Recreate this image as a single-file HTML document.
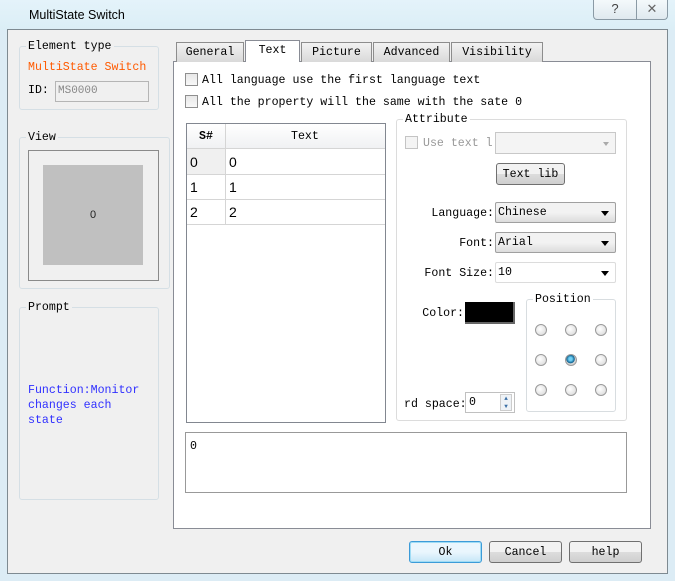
<!DOCTYPE html>
<html><head><style>
*{box-sizing:border-box;margin:0;padding:0}
body{width:675px;height:581px;background:#dcecf5;position:relative;overflow:hidden;font-family:"Liberation Mono",monospace;font-size:11.6px;color:#000;line-height:17px}
.a{position:absolute}
.gb{position:absolute;border:1px solid #d5dfe5;border-radius:3px}
.lg{position:absolute;background:#f0f0f0;padding:0 2px;line-height:13px;top:-7px;left:6px}
.tab{position:absolute;top:42px;height:20px;border:1px solid #8d8d8d;border-bottom:none;background:linear-gradient(#f2f2f2,#d9d9d9);text-align:center;line-height:19px}
.cb{position:absolute;width:13px;height:13px;border:1px solid #8f8f8f;background:linear-gradient(#e8e8e8,#f8f8f8)}
.btn{position:absolute;border:1px solid #707070;border-radius:3px;background:linear-gradient(#f2f2f2 50%,#dddddd 50%,#cfcfcf);text-align:center;line-height:21px}
.sel{position:absolute;border:1px solid #a0a0a0;border-radius:2px;background:linear-gradient(#f2f2f2 50%,#dcdcdc);line-height:20px;padding-left:2px;height:21px}
.sel:after{content:"";position:absolute;right:6px;top:8px;border:4px solid transparent;border-top:5px solid #000;border-bottom:none}
.rad{position:absolute;width:12px;height:12px;border-radius:50%;border:1px solid #9a9a9a;background:radial-gradient(circle at 40% 40%,#fff,#d4d4d4)}
.r{text-align:right}
</style></head><body>
<div class="a" style="left:0;top:0;width:675px;height:30px;background:linear-gradient(#e4f3fa,#dbeef6)"></div>
<div class="a" style="left:29px;top:7px;font-family:'Liberation Sans',sans-serif;font-size:12.5px">MultiState Switch</div>
<div class="a" style="left:593px;top:0;width:44px;height:20px;border:1px solid #8a9aa5;border-top:none;border-radius:0 0 0 4px;background:linear-gradient(#f4f9fb,#dfe9ef);text-align:center;font-family:'Liberation Sans';font-size:13px;line-height:18px;color:#444">?</div>
<div class="a" style="left:636px;top:0;width:32px;height:20px;border:1px solid #8a9aa5;border-top:none;border-radius:0 0 4px 0;background:linear-gradient(#f4f9fb,#dfe9ef);text-align:center;font-family:'Liberation Sans';font-size:13px;line-height:18px;color:#666">✕</div>
<div class="a" style="left:7px;top:29px;width:661px;height:545px;background:#f0f0f0;border:1px solid #7e8a91"></div>

<div class="gb" style="left:19px;top:46px;width:140px;height:64px"><span class="lg" style="top:-7px">Element type</span></div>
<div class="a" style="left:28px;top:59px;color:#ff5a00">MultiState Switch</div>
<div class="a" style="left:28px;top:82px">ID:</div>
<div class="a" style="left:55px;top:81px;width:94px;height:21px;border:1px solid #b5b5b5;background:#f0f0f0;color:#888;line-height:19px;padding-left:2px;font-size:11px">MS0000</div>

<div class="gb" style="left:19px;top:137px;width:151px;height:152px"><span class="lg">View</span></div>
<div class="a" style="left:28px;top:150px;width:131px;height:131px;border:1px solid #8a8a8a"></div>
<div class="a" style="left:43px;top:165px;width:100px;height:100px;background:#c0c0c0;text-align:center;line-height:100px;font-family:'Liberation Sans';font-size:11px;color:#222">0</div>

<div class="gb" style="left:19px;top:307px;width:140px;height:193px"><span class="lg">Prompt</span></div>
<div class="a" style="left:28px;top:383px;color:#3030ff;line-height:15px">Function:Monitor<br>changes each<br>state</div>

<div class="a" style="left:173px;top:61px;width:478px;height:468px;background:#fff;border:1px solid #898c95"></div>
<div class="tab" style="left:176px;width:68px">General</div>
<div class="tab" style="left:245px;top:40px;height:22px;width:55px;background:#fff;border-color:#898c95">Text</div>
<div class="tab" style="left:301px;width:71px">Picture</div>
<div class="tab" style="left:373px;width:77px">Advanced</div>
<div class="tab" style="left:451px;width:92px">Visibility</div>

<div class="cb" style="left:185px;top:73px"></div><div class="a" style="left:202px;top:72px">All language use the first language text</div>
<div class="cb" style="left:185px;top:95px"></div><div class="a" style="left:202px;top:94px">All the property will the same with the sate 0</div>

<div class="a" style="left:186px;top:123px;width:200px;height:300px;border:1px solid #828790;background:#fff"></div>
<div class="a" style="left:187px;top:124px;width:198px;height:25px;background:linear-gradient(#fff,#f0f1f3);border-bottom:1px solid #d5d5d5"></div>
<div class="a" style="left:225px;top:124px;width:1px;height:100px;background:#d5d5d5"></div>
<div class="a" style="left:199px;top:128px;font-weight:bold">S#</div>
<div class="a" style="left:291px;top:128px">Text</div>
<div class="a" style="left:187px;top:149px;width:38px;height:25px;background:#f0f0f0"></div>
<div class="a" style="left:187px;top:174px;width:198px;height:1px;background:#d5d5d5"></div>
<div class="a" style="left:187px;top:199px;width:198px;height:1px;background:#d5d5d5"></div>
<div class="a" style="left:187px;top:224px;width:198px;height:1px;background:#d5d5d5"></div>
<div class="a" style="left:190px;top:150px;font-family:'Liberation Sans';font-size:14px;line-height:25px">0<br>1<br>2</div>
<div class="a" style="left:229px;top:150px;font-family:'Liberation Sans';font-size:14px;line-height:25px">0<br>1<br>2</div>

<div class="gb" style="left:396px;top:119px;width:231px;height:302px;background:#fff;border-color:#dcdcdc"><span class="lg" style="left:6px;background:#fff">Attribute</span></div>
<div class="cb" style="left:405px;top:136px;border-color:#c4c4c4;background:#f4f4f4"></div>
<div class="a" style="left:423px;top:135px;color:#999">Use text l</div>
<div class="a" style="left:495px;top:132px;width:121px;height:22px;border:1px solid #c8c8c8;background:#f4f4f4"></div>
<div class="a" style="left:603px;top:142px;border:3px solid transparent;border-top:4px solid #aaa"></div>
<div class="btn" style="left:496px;top:163px;width:69px;height:22px">Text lib</div>
<div class="a r" style="left:400px;top:205px;width:94px">Language:</div>
<div class="sel" style="left:495px;top:202px;width:121px">Chinese</div>
<div class="a r" style="left:400px;top:235px;width:94px">Font:</div>
<div class="sel" style="left:495px;top:232px;width:121px">Arial</div>
<div class="a r" style="left:400px;top:265px;width:94px">Font Size:</div>
<div class="sel" style="left:495px;top:262px;width:121px;background:#fff;border-color:#dcdcdc">10</div>
<div class="a r" style="left:400px;top:305px;width:64px">Color:</div>
<div class="a" style="left:465px;top:302px;width:50px;height:22px;background:#000;border-right:2px solid #666;border-bottom:2px solid #666"></div>
<div class="gb" style="left:526px;top:299px;width:90px;height:113px;background:#fff;border-color:#d8dde0"><span class="lg" style="left:6px;background:#fff">Position</span></div>
<div class="rad" style="left:535px;top:324px"></div><div class="rad" style="left:565px;top:324px"></div><div class="rad" style="left:595px;top:324px"></div>
<div class="rad" style="left:535px;top:354px"></div><div class="rad" style="left:565px;top:354px;background:radial-gradient(circle at 45% 40%,#6fd0f5 20%,#0a5d8c 50%,#d4d4d4 55%)"></div><div class="rad" style="left:595px;top:354px"></div>
<div class="rad" style="left:535px;top:384px"></div><div class="rad" style="left:565px;top:384px"></div><div class="rad" style="left:595px;top:384px"></div>
<div class="a" style="left:404px;top:396px">rd space:</div>
<div class="a" style="left:465px;top:392px;width:50px;height:21px;border:1px solid #c0c0c0;background:#fff;padding-left:3px;line-height:20px">0</div>
<div class="a" style="left:500px;top:394px;width:12px;height:17px;border:1px solid #ccc;background:#eef2f6;font-size:6px;line-height:8px;text-align:center;color:#3a6ea5">▲<br>▼</div>

<div class="a" style="left:185px;top:432px;width:442px;height:61px;border:1px solid #999;background:#fff;padding:5px 0 0 4px">0</div>

<div class="btn" style="left:409px;top:541px;width:73px;height:22px;border-color:#3c9bd8;box-shadow:inset 0 0 0 1px #9fdcf5;background:linear-gradient(#eaf6fd 50%,#c6e6f7)">Ok</div>
<div class="btn" style="left:489px;top:541px;width:73px;height:22px">Cancel</div>
<div class="btn" style="left:569px;top:541px;width:73px;height:22px">help</div>
</body></html>
